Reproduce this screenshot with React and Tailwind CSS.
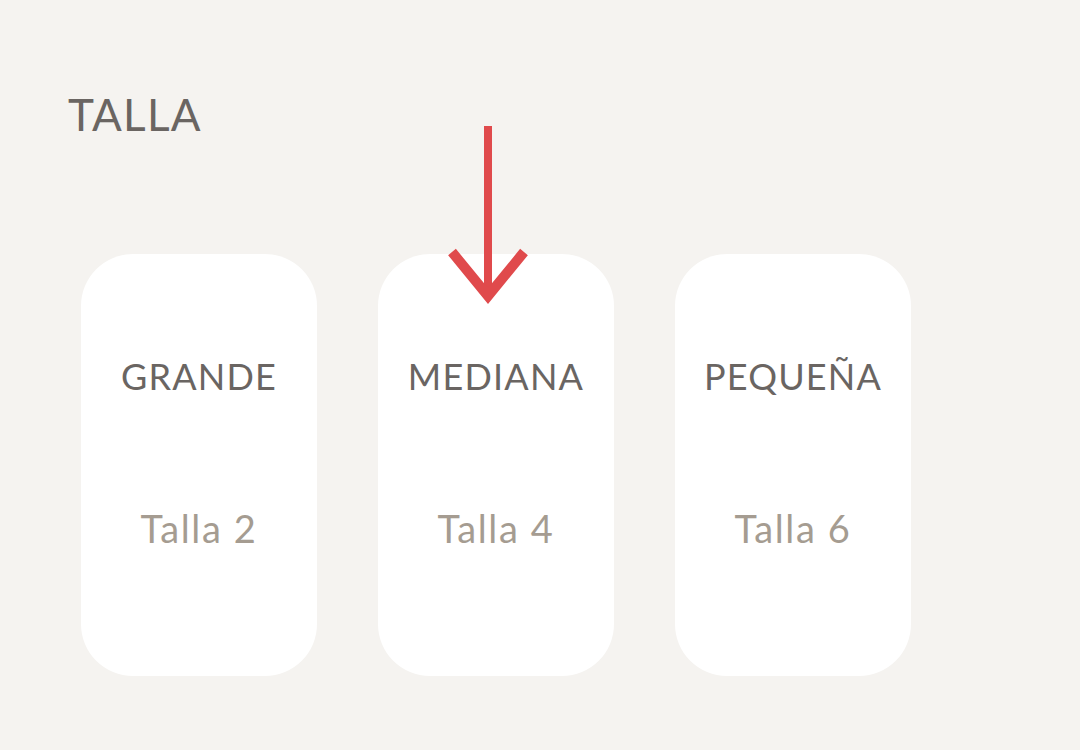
import React from 'react';

const sizes = [
    { name: 'GRANDE', talla: 'Talla 2' },
    { name: 'MEDIANA', talla: 'Talla 4' },
    { name: 'PEQUEÑA', talla: 'Talla 6' },
];

export default function App() {
    return (
        <div className="relative w-[1080px] h-[750px] bg-[#f5f3f0] overflow-hidden" style={{ fontFamily: 'Lato, "Noto Sans", sans-serif' }}>
            <h1 className="pt-[88px] pl-[68px] text-[44px] leading-[52px] font-normal text-[#6a6562] tracking-[1.2px]">TALLA</h1>

            <div className="flex gap-[61px] pl-[81px] mt-[114px]">
                {sizes.map((s) => (
                    <div key={s.name} className="w-[236px] h-[422px] bg-white rounded-[52px] flex flex-col items-center pt-[100px]">
                        <span className="text-[36px] leading-[44px] text-[#6a6562] tracking-[1.2px]">{s.name}</span>
                        <span className="mt-[107px] text-[38px] leading-[46px] text-[#a59c91] tracking-[1.6px]">{s.talla}</span>
                    </div>
                ))}
            </div>

            {/* arrow pointing at the selected size */}
            <svg className="absolute left-[440px] top-[120px]" width="96" height="190" viewBox="0 0 96 190">
                <line x1="48" y1="6" x2="48" y2="170" stroke="#e04a4c" strokeWidth="8" />
                <polyline points="12,132 48,176 84,132" fill="none" stroke="#e04a4c" strokeWidth="10" strokeLinejoin="miter" />
            </svg>
        </div>
    );
}
